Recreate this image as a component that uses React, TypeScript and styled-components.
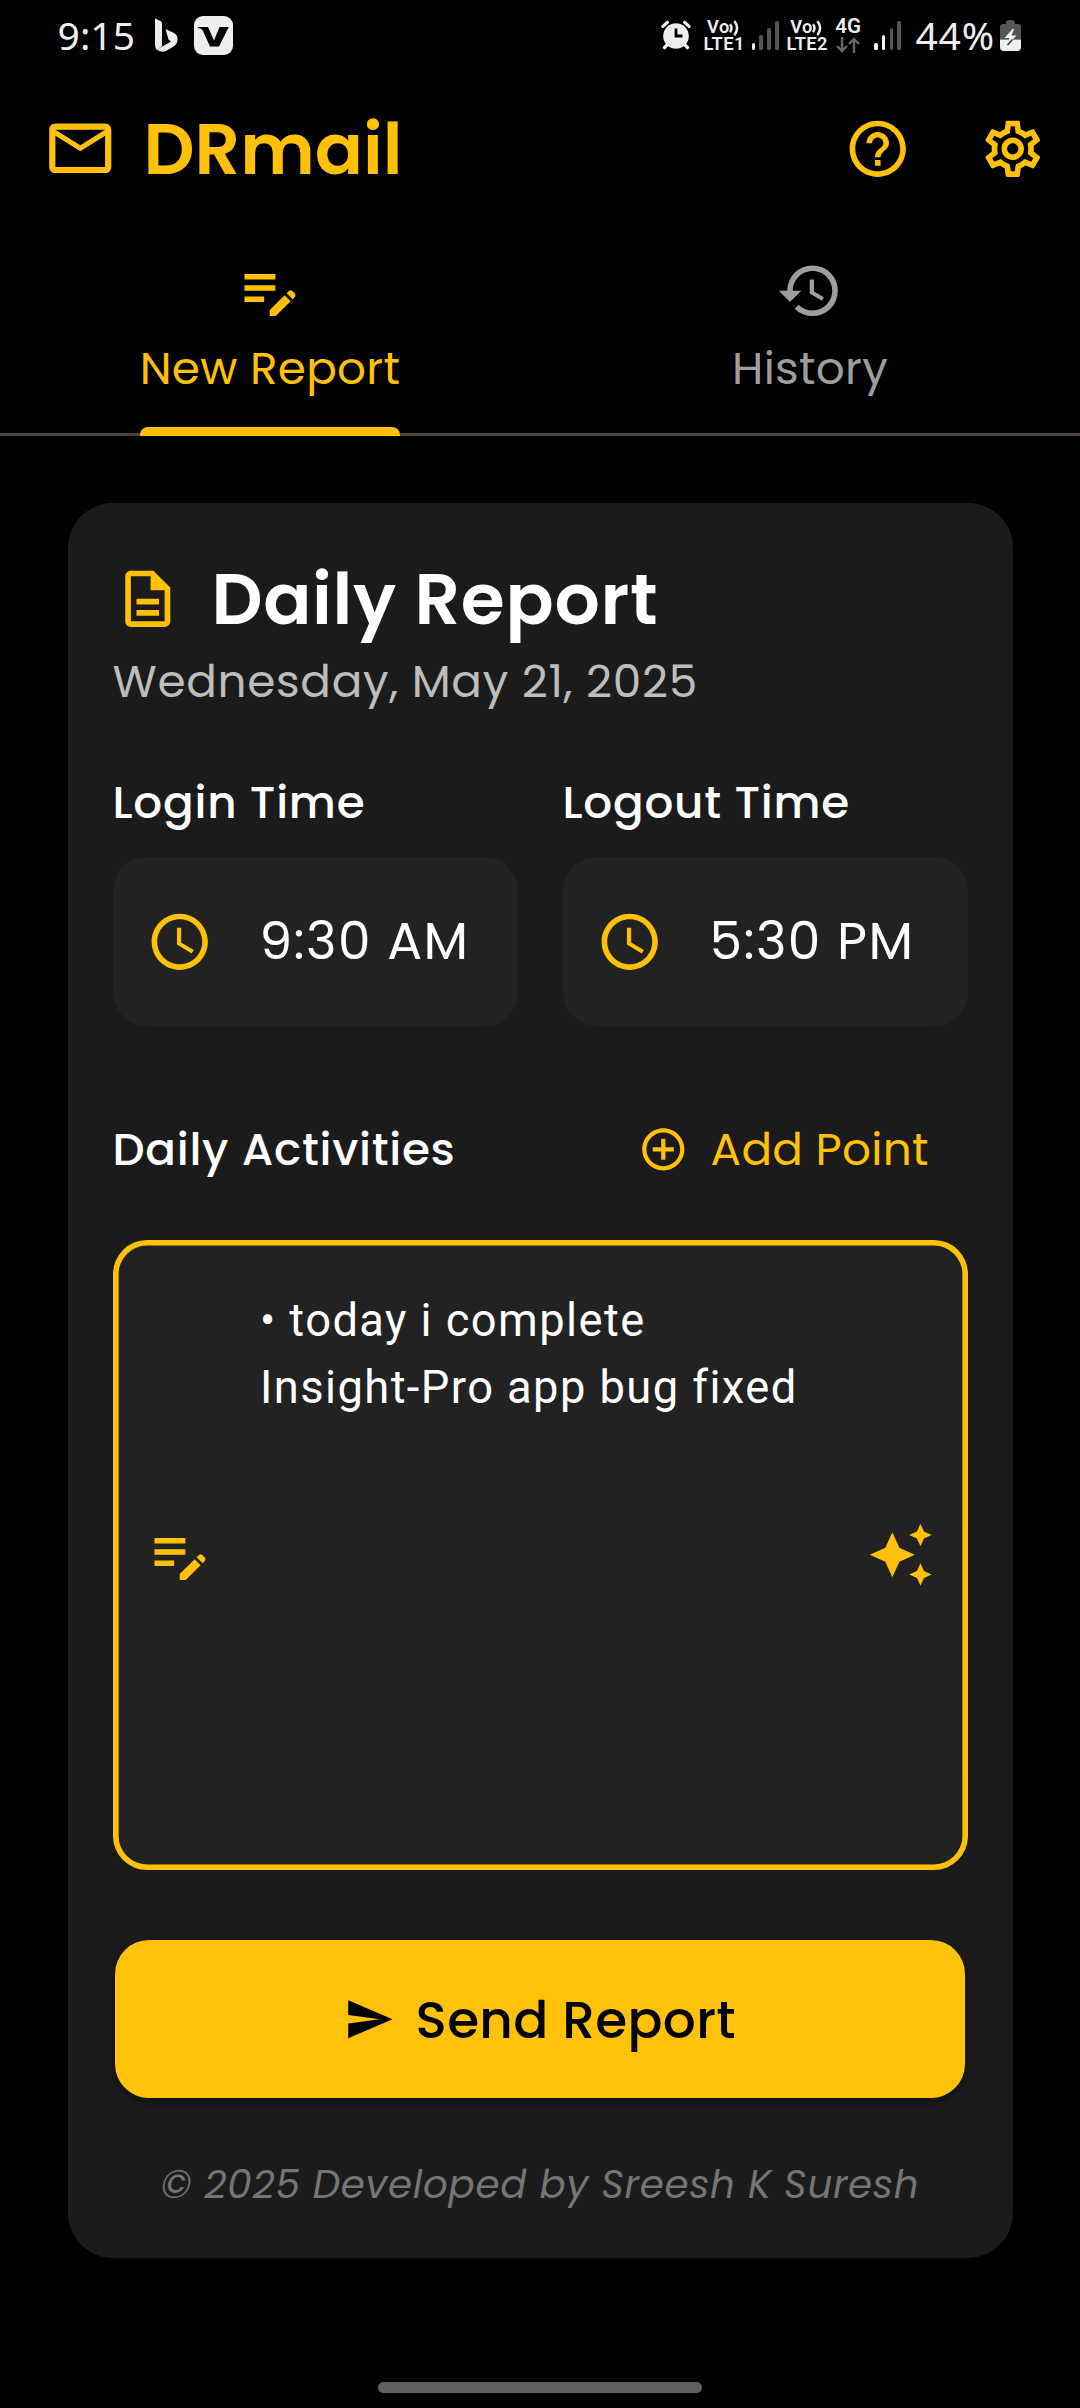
import React from "react";
import styled, { createGlobalStyle } from "styled-components";
import {
  MdAddCircleOutline,
  MdAutoAwesome,
  MdEditNote,
  MdHelpOutline,
  MdHistory,
  MdMailOutline,
  MdOutlineDescription,
  MdOutlineSettings,
  MdSend,
} from "react-icons/md";

const amber = "#ffc107";

const GlobalStyle = createGlobalStyle`
  * { box-sizing: border-box; }
  body {
    margin: 0;
    background: #000;
    font-family: Poppins, Inter, "Noto Sans", sans-serif;
  }
  button { border: 0; background: none; padding: 0; font: inherit; color: inherit; letter-spacing: inherit; }
  svg { display: block; flex: none; }
`;

const Screen = styled.div`
  width: 1080px;
  height: 2408px;
  display: flex;
  flex-direction: column;
  background: #000;
  overflow: hidden;
`;

const Label = styled.span<{ $size: number; $weight?: number; $color?: string; $track?: number }>`
  font-size: ${(p) => p.$size}px;
  font-weight: ${(p) => p.$weight ?? 400};
  color: ${(p) => p.$color ?? "#fff"};
  letter-spacing: ${(p) => p.$track ?? 0}px;
  white-space: nowrap;
`;

/* Status bar */
const StatusBar = styled.div`
  height: 70px;
  padding: 0 59px 0 57.6px;
  display: flex;
  align-items: center;
  justify-content: space-between;
  color: #eee;
  font-family: Roboto, sans-serif;
`;
const StatusGroup = styled.div`
  display: flex;
  align-items: center;
`;
const StatusText = styled.span<{ $track?: number }>`
  font-family: "Noto Sans", Roboto, sans-serif;
  font-size: 39px;
  line-height: 70px;
  letter-spacing: ${(p) => p.$track ?? 0}px;
`;
const BatteryText = styled(StatusText)`
  width: 79.5px;
  margin: 0 5px 0 14.5px;
`;
const BingIcon = styled.svg`
  margin-left: 19px;
`;
const AppBadge = styled.svg`
  margin-left: 15px;
`;
const Volte = styled.div<{ $gap: number }>`
  position: relative;
  width: 39px;
  margin-left: ${(p) => p.$gap}px;
  font-size: 18.3px;
  font-weight: 600;
  line-height: 17.5px;
  letter-spacing: 0.4px;
  text-indent: 3.6px;
  white-space: pre;
`;
const Waves = styled.svg`
  position: absolute;
  left: 25.5px;
  top: 2px;
`;
const Network = styled.div`
  width: 26px;
  margin: 0 13px 0 9.5px;
  display: flex;
  flex-direction: column;
  align-items: center;
  font-size: 20.5px;
  font-weight: 600;
  line-height: 17px;
  gap: 2px;
`;
const Bars = styled.div<{ $gap: number }>`
  margin-left: ${(p) => p.$gap}px;
  height: 29px;
  display: flex;
  align-items: flex-end;
  gap: 4.2px;
`;
const Bar = styled.span<{ $h: number; $on: boolean }>`
  width: 3.6px;
  height: ${(p) => p.$h}px;
  border-radius: 1.5px;
  background: ${(p) => (p.$on ? "#f0f0f0" : "#555")};
`;

function Signal({ strength, gap }: { strength: number; gap: number }) {
  return (
    <Bars $gap={gap}>
      {[7, 15, 22, 29].map((h, i) => (
        <Bar key={h} $h={h} $on={i < strength} />
      ))}
    </Bars>
  );
}

function VolteMark({ sim, gap }: { sim: number; gap: number }) {
  return (
    <Volte $gap={gap}>
      {`Vo\nLTE${sim}`}
      <Waves width="12" height="16" viewBox="0 0 12 16" fill="none" stroke="#eee" strokeWidth="2.5">
        <path d="M1 4.2Q4 8 1 12.2M5.4 1Q10.8 8 5.4 15.2" />
      </Waves>
    </Volte>
  );
}

/* App bar */
const AppBar = styled.header`
  height: 157px;
  padding: 0 34px 0 42.5px;
  display: flex;
  align-items: center;
  color: ${amber};
`;
const AppTitle = styled.h1`
  flex: 1;
  margin: 0 0 0 26.5px;
  font-size: 71.2px;
  font-weight: 600;
  line-height: 80px;
`;
const IconButton = styled.button`
  width: 67.5px;
  height: 67.5px;
  margin-left: 67.5px;
`;

/* Tabs */
const Tabs = styled.nav`
  height: 209px;
  display: grid;
  grid-template-columns: 1fr 1fr;
  border-bottom: 3px solid #4f4637;
`;
const Tab = styled.button<{ $active?: boolean }>`
  height: 209px;
  padding-top: 30px;
  display: flex;
  flex-direction: column;
  align-items: center;
  color: ${(p) => (p.$active ? amber : "#9e9e9e")};
`;
const TabLabel = styled.span`
  margin-top: 13.7px;
  font-size: 45.3px;
  line-height: 60px;
  letter-spacing: 0.28px;
`;
const Indicator = styled.span`
  width: 260px;
  height: 9px;
  margin-top: auto;
  border-radius: 8px 8px 0 0;
  background: ${amber};
`;

/* Report card */
const Card = styled.main`
  width: 945px;
  height: 1755px;
  margin: 67px auto 0;
  padding: 45px 45px 0;
  border-radius: 45px;
  background: #1b1b1b;
  display: flex;
  flex-direction: column;
`;
const TitleRow = styled.div`
  height: 102px;
  padding-left: 1px;
  display: flex;
  align-items: center;
  gap: 30.4px;
  color: ${amber};
`;
const DateLine = styled.div`
  height: 62px;
  line-height: 62px;
`;
const Times = styled.div`
  margin-top: 60px;
  display: grid;
  grid-template-columns: 1fr 1fr;
  column-gap: 45px;
`;
const TimeField = styled.div`
  display: flex;
  flex-direction: column;
  gap: 25px;
  line-height: 60px;
`;
const TimeBox = styled.div`
  height: 169px;
  padding-left: 33.5px;
  border-radius: 34px;
  background: #222;
  display: flex;
  align-items: center;
  gap: 46px;
`;
const TimeValue = styled(Label)`
  padding-bottom: 2px;
`;
const ActivitiesHeader = styled.div`
  height: 135px;
  margin-top: 56px;
  padding-right: 40px;
  display: flex;
  align-items: center;
  justify-content: space-between;
`;
const AddPoint = styled.button`
  width: 289.5px;
  display: flex;
  align-items: center;
  gap: 22px;
  color: ${amber};
`;
const Editor = styled.div`
  height: 630px;
  margin-top: 23px;
  padding: 0 33.5px;
  border-radius: 34px;
  background: #222;
  box-shadow: inset 0 0 0 5.6px ${amber};
  display: flex;
  align-items: center;
  color: ${amber};
`;
const EditorText = styled.div`
  flex: 1;
  align-self: stretch;
  padding: 46.6px 0 0 46.5px;
  font-family: Roboto, sans-serif;
  font-size: 45.3px;
  line-height: 67px;
  letter-spacing: 1.42px;
  color: #fff;
  white-space: pre;
`;
const SendButton = styled.button`
  height: 158px;
  margin: 70px 2.5px 0;
  padding-left: 229px;
  border-radius: 34px;
  background: #ffc20a;
  box-shadow: 0 5px 8px rgba(0, 0, 0, 0.3);
  display: flex;
  align-items: center;
  gap: 21px;
  color: #000;
`;
const SendLabel = styled(Label)`
  padding-top: 3.6px;
`;
const Footer = styled.footer`
  margin-top: 57px;
  height: 60px;
  line-height: 60px;
  text-align: center;
  font-style: italic;
`;
const NavPill = styled.div`
  width: 324px;
  height: 11px;
  margin: 124px auto 0;
  border-radius: 6px;
  background: #606060;
`;

function ClockIcon() {
  return (
    <svg width="67.5" height="67.5" viewBox="0 0 24 24" fill={amber}>
      <path d="M11.99 2C6.47 2 2 6.48 2 12s4.47 10 9.99 10C17.52 22 22 17.52 22 12S17.52 2 11.99 2zM12 20c-4.42 0-8-3.58-8-8s3.58-8 8-8 8 3.58 8 8-3.58 8-8 8zm.5-13H11v6l5.25 3.15.75-1.23-4.5-2.67z" />
    </svg>
  );
}

function TimeInput({ label, value }: { label: string; value: string }) {
  return (
    <TimeField>
      <Label $size={45.3} $weight={500} $track={0.75}>{label}</Label>
      <TimeBox>
        <ClockIcon />
        <TimeValue $size={51.75} $track={1.45}>{value}</TimeValue>
      </TimeBox>
    </TimeField>
  );
}

export default function App() {
  return (
    <Screen>
      <GlobalStyle />
      <StatusBar>
        <StatusGroup>
          <StatusText>9:15</StatusText>
          <BingIcon width="25" height="34" viewBox="0 0 25 34" fill="#eee">
            <path d="M1 0.5L6.5 3Q8 3.8 8 5.5V28L3 32Q1 30 1 27z" />
            <path d="M11.5 11L20 15Q24 17.5 23.5 22Q23 26 19.5 28.5L12 33Q7 35 3 31.5L17 23.5L14.5 21.5z" />
          </BingIcon>
          <AppBadge width="39" height="39" viewBox="0 0 39 39">
            <rect width="39" height="39" rx="9" fill="#eee" />
            <path d="M4 11H14L20 24.5L25.5 11H34.7L25 30.5H16L8.5 14Q7.5 12.3 4 12z" fill="#000" />
          </AppBadge>
        </StatusGroup>
        <StatusGroup>
          <svg width="30" height="30" viewBox="0 0 30 30">
            <circle cx="15" cy="16" r="12.8" fill="#eee" />
            <path d="M2 6.3L6.3 2.3M28 6.3L23.7 2.3M6 25L3.5 27.5M24 25L26.5 27.5" stroke="#eee" strokeWidth="3.2" strokeLinecap="round" />
            <path d="M15 8.5V16H21.5" fill="none" stroke="#000" strokeWidth="2.8" />
          </svg>
          <VolteMark sim={1} gap={12.3} />
          <Signal strength={1} gap={9.2} />
          <VolteMark sim={2} gap={8} />
          <Network>
            4G
            <svg width="24" height="16" viewBox="0 0 24 16" fill="none" stroke="#666" strokeWidth="2.4">
              <path d="M6 0V14M1 9L6 14L11 9M18 16V2M13 7L18 2L23 7" />
            </svg>
          </Network>
          <Signal strength={2} gap={0} />
          <BatteryText $track={0.8}>44%</BatteryText>
          <svg width="21" height="31" viewBox="0 0 21 31">
            <path d="M6 3Q6 0 9 0H12Q15 0 15 3V4H18Q21 4 21 7V19.5H0V7Q0 4 3 4H6z" fill="#555" />
            <path d="M0 19.5H21V27Q21 31 17 31H4Q0 31 0 27z" fill="#f0f0f0" />
            <path d="M12.5 9L4.5 18H9.5L7.5 25L16.5 15.5H11.5L14 9z" fill="#f0f0f0" />
            <path d="M7.5 25L12.5 19.5" stroke="#333" strokeWidth="1.4" />
          </svg>
        </StatusGroup>
      </StatusBar>

      <AppBar>
        <MdMailOutline size={74.5} />
        <AppTitle>DRmail</AppTitle>
        <IconButton aria-label="Help"><MdHelpOutline size={67.5} /></IconButton>
        <IconButton aria-label="Settings"><MdOutlineSettings size={67.5} /></IconButton>
      </AppBar>

      <Tabs>
        <Tab $active>
          <MdEditNote size={67.5} />
          <TabLabel>New Report</TabLabel>
          <Indicator />
        </Tab>
        <Tab>
          <MdHistory size={67.5} />
          <TabLabel>History</TabLabel>
        </Tab>
      </Tabs>

      <Card>
        <TitleRow>
          <MdOutlineDescription size={67.5} />
          <Label $size={71.2} $weight={600} $track={0.7}>Daily Report</Label>
        </TitleRow>
        <DateLine>
          <Label $size={45.3} $color="#bdbdbd" $track={0.7}>Wednesday, May 21, 2025</Label>
        </DateLine>
        <Times>
          <TimeInput label="Login Time" value="9:30 AM" />
          <TimeInput label="Logout Time" value="5:30 PM" />
        </Times>
        <ActivitiesHeader>
          <Label $size={45.3} $weight={500} $track={0.72}>Daily Activities</Label>
          <AddPoint>
            <MdAddCircleOutline size={50.6} />
            <Label $size={45.3} $color={amber} $track={0.28}>Add Point</Label>
          </AddPoint>
        </ActivitiesHeader>
        <Editor>
          <MdEditNote size={67.5} />
          <EditorText>{"• today i complete\nInsight-Pro app bug fixed"}</EditorText>
          <MdAutoAwesome size={67.5} />
        </Editor>
        <SendButton>
          <MdSend size={50.6} />
          <SendLabel $size={51.75} $weight={500} $color="#000" $track={0.28}>Send Report</SendLabel>
        </SendButton>
        <Footer>
          <Label $size={38.8} $color="#757575" $track={0.7}>© 2025 Developed by Sreesh K Suresh</Label>
        </Footer>
      </Card>
      <NavPill />
    </Screen>
  );
}
